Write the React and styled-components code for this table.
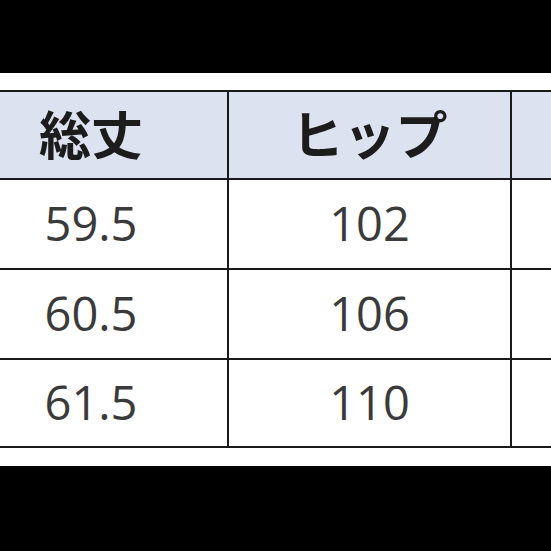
import React from "react";
import styled, { createGlobalStyle } from "styled-components";

const GlobalStyle = createGlobalStyle`
  html, body {
    margin: 0;
    padding: 0;
    background: #000000;
  }
`;

const Page = styled.div`
  width: 551px;
  height: 551px;
  background: #000000;
  padding-top: 73px;
  box-sizing: border-box;
  overflow: hidden;
`;

const Band = styled.div`
  background: #ffffff;
  padding: 17px 0 18px;
  overflow: hidden;
`;

const Table = styled.div`
  display: grid;
  grid-template-columns: 274px 283px 283px;
  margin-left: -45px;
  border-top: 2px solid #1a1a1a;
`;

const Cell = styled.div`
  box-sizing: border-box;
  height: ${(p) => p.$h}px;
  display: flex;
  align-items: center;
  justify-content: center;
  border-bottom: 2px solid #1a1a1a;
  border-right: 2px solid #1a1a1a;
  background: ${(p) => (p.$head ? "#dce2ef" : "#ffffff")};
  white-space: nowrap;
`;

const HeadText = styled.span`
  font-family: "Noto Sans CJK JP", sans-serif;
  font-weight: 700;
  font-size: 52px;
  color: #1c1c1c;
  margin-top: -6px;
`;

const NumText = styled.span`
  font-family: "Open Sans", sans-serif;
  font-size: 47px;
  color: #3a3a3a;
  margin-top: -2px;
`;

const headers = ["総丈", "ヒップ", "ウエスト"];
const rows = [
  ["59.5", "102", ""],
  ["60.5", "106", ""],
  ["61.5", "110", ""],
];
const rowHeights = [90, 90, 88];

export default function App() {
  return (
    <Page>
      <GlobalStyle />
      <Band>
        <Table>
          {headers.map((h) => (
            <Cell key={h} $head $h={88}>
              <HeadText>{h}</HeadText>
            </Cell>
          ))}
          {rows.map((r, i) =>
            r.map((v, j) => (
              <Cell key={`${i}-${j}`} $h={rowHeights[i]}>
                {v && <NumText>{v}</NumText>}
              </Cell>
            ))
          )}
        </Table>
      </Band>
    </Page>
  );
}
